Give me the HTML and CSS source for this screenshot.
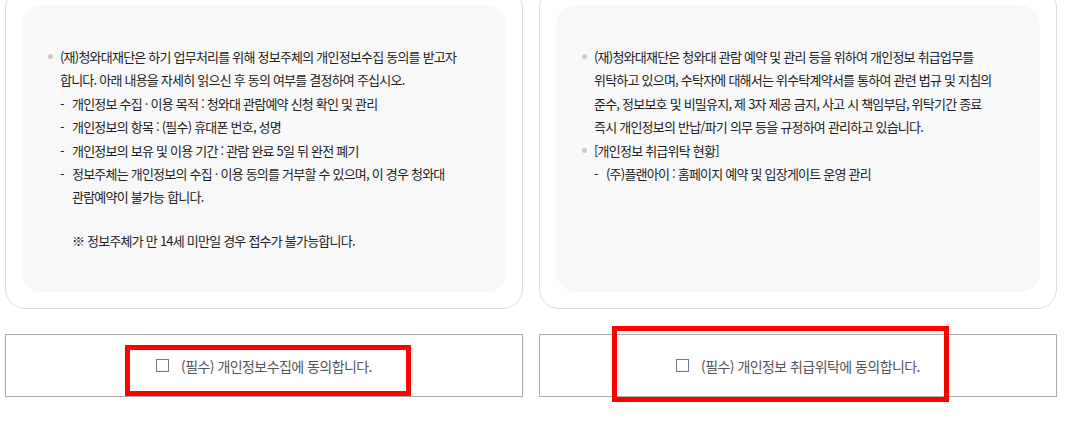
FILE: index.html
```html
<!DOCTYPE html>
<html lang="ko">

<head>
    <meta charset="UTF-8">
    <meta name="viewport" content="width=device-width, initial-scale=1.0">
    <title>개인정보 동의</title>
    <link rel="stylesheet" href="styles.css">
</head>

<body>
    <div class="agree-wrap">
        <div class="agree-col">
            <div class="terms-card">
                <div class="terms-box">
                    <ul class="terms-list">
                        <li>
                            (재)청와대재단은 하기 업무처리를 위해 정보주체의 개인정보수집 동의를 받고자<br>
                            합니다. 아래 내용을 자세히 읽으신 후 동의 여부를 결정하여 주십시오.
                            <ul class="terms-sub">
                                <li>개인정보 수집 · 이용 목적 : 청와대 관람예약 신청 확인 및 관리</li>
                                <li>개인정보의 항목 : (필수) 휴대폰 번호, 성명</li>
                                <li>개인정보의 보유 및 이용 기간 : 관람 완료 5일 뒤 완전 폐기</li>
                                <li>정보주체는 개인정보의 수집 · 이용 동의를 거부할 수 있으며, 이 경우 청와대<br>관람예약이 불가능 합니다.</li>
                            </ul>
                            <p class="terms-note">※ 정보주체가 만 14세 미만일 경우 접수가 불가능합니다.</p>
                        </li>
                    </ul>
                </div>
            </div>
            <label class="agree-check">
                <input type="checkbox" class="check-input">
                <span class="check-box"></span>
                (필수) 개인정보수집에 동의합니다.
            </label>
        </div>

        <div class="agree-col">
            <div class="terms-card">
                <div class="terms-box">
                    <ul class="terms-list">
                        <li>
                            (재)청와대재단은 청와대 관람 예약 및 관리 등을 위하여 개인정보 취급업무를<br>
                            위탁하고 있으며, 수탁자에 대해서는 위수탁계약서를 통하여 관련 법규 및 지침의<br>
                            준수, 정보보호 및 비밀유지, 제 3자 제공 금지, 사고 시 책임부담, 위탁기간 종료<br>
                            즉시 개인정보의 반납/파기 의무 등을 규정하여 관리하고 있습니다.
                        </li>
                        <li>
                            [개인정보 취급위탁 현황]
                            <ul class="terms-sub">
                                <li>(주)플랜아이 : 홈페이지 예약 및 입장게이트 운영 관리</li>
                            </ul>
                        </li>
                    </ul>
                </div>
            </div>
            <label class="agree-check">
                <input type="checkbox" class="check-input">
                <span class="check-box"></span>
                (필수) 개인정보 취급위탁에 동의합니다.
            </label>
        </div>
    </div>

    <!-- review marks -->
    <span class="mark mark-first"></span>
    <span class="mark mark-second"></span>
</body>

</html>
```

FILE: styles.css
```css
body {
    margin: 0;
    padding: 0;
    background: #fff;
    font-family: "Noto Sans CJK KR", "Noto Sans", sans-serif;
    color: #222;
    position: relative;
    height: 100vh;
    overflow: hidden;
}

.agree-wrap {
    display: grid;
    grid-template-columns: 518px 518px;
    column-gap: 16px;
    padding-left: 5px;
    margin-top: -12px;
}

.agree-col {
    display: flex;
    flex-direction: column;
    row-gap: 25px;
}

.terms-card {
    display: flex;
    flex-direction: column;
    flex: 1;
    border: 1px solid #ddd;
    border-radius: 20px;
    padding: 16px;
}

.terms-box {
    flex: 1;
    background: #f8f8f8;
    border-radius: 20px;
    padding: 40px 20px 40px 24px;
}

.terms-list {
    list-style: none;
    margin: 0;
    padding: 0;
    font-size: 13px;
    line-height: 23.4px;
    letter-spacing: -0.06em;
}

.terms-list > li {
    position: relative;
    padding-left: 14px;
}

.terms-list > li::before {
    content: "";
    position: absolute;
    left: 2px;
    top: 9px;
    width: 5px;
    height: 5px;
    border-radius: 50%;
    background: #ccc;
}

.terms-sub {
    list-style: none;
    margin: 0;
    padding: 0;
}

.terms-sub li {
    position: relative;
    padding-left: 12px;
}

.terms-sub li::before {
    content: "-";
    position: absolute;
    left: 0;
    top: 0;
}

.terms-note {
    margin: 20px 0 0;
    padding-left: 12px;
}

.agree-check {
    display: flex;
    align-items: center;
    justify-content: center;
    height: 61px;
    border: 1px solid #aaa;
    font-size: 14px;
    color: #555;
    letter-spacing: -0.04em;
    cursor: pointer;
}

.check-input {
    display: none;
}

.check-box {
    width: 11px;
    height: 11px;
    border: 1px solid #777;
    margin-right: 12px;
}

.mark {
    position: absolute;
    border: 5px solid #ff0000;
    box-sizing: border-box;
}

.mark-first {
    left: 125px;
    top: 345px;
    width: 286px;
    height: 51px;
}

.mark-second {
    left: 612px;
    top: 326px;
    width: 337px;
    height: 76px;
}
```
